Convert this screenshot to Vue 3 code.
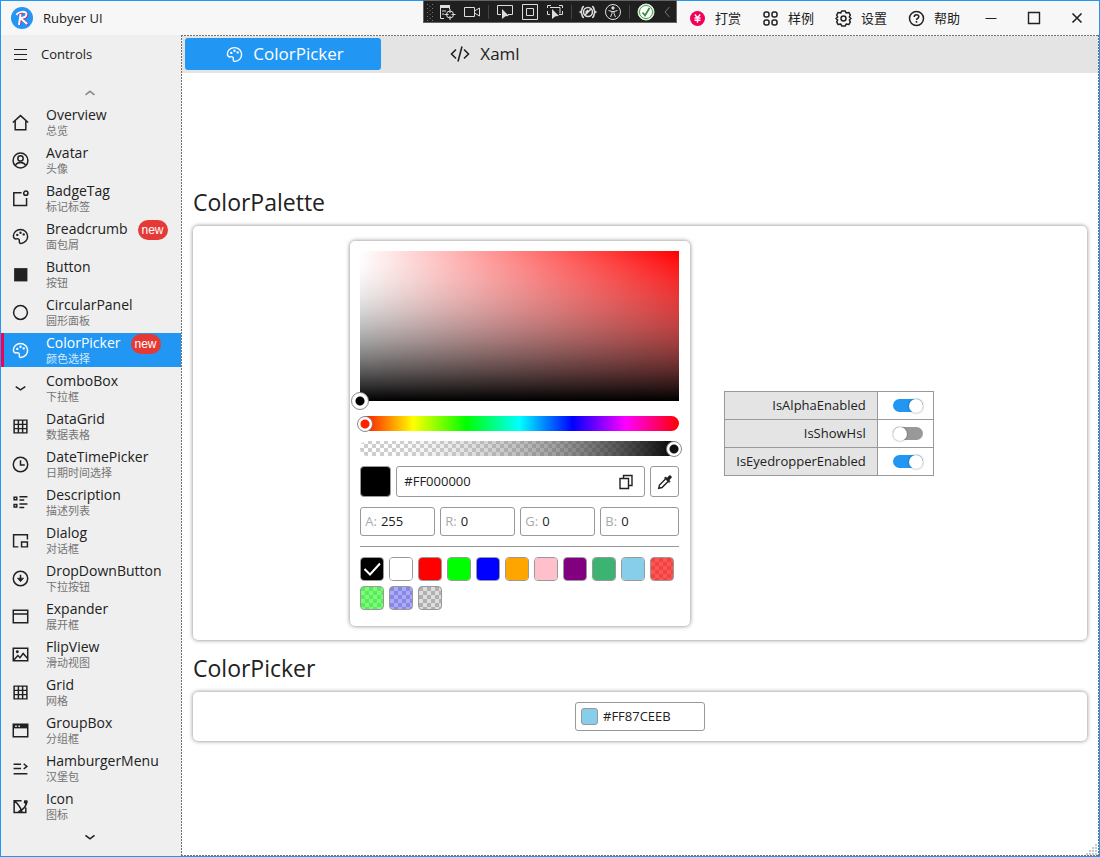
<script setup>
import { ref, reactive } from 'vue'

const palette =
  'M8 1.5C4.2 1.5 1.3 4.2 1.3 7.6c0 2 1.6 3 3 2.6 1.5-.5 2.800.3 2.600 1.900-.2 1.500.3 2.500 1.600 2.400C12.200 14.300 14.800 11.200 14.700 7.800 14.600 4.200 11.700 1.500 8 1.500Z'

const icons = {
  home: '<path d="M.8 8 8 1.500 15.200 8M3 6.500v8.300h10V6.500"/>',
  avatar: '<circle cx="8" cy="8" r="7"/><circle cx="8" cy="6" r="2.500"/><path d="M3 12.700c1.200-2.200 3-2.900 5-2.900s3.800.7 5 2.900"/>',
  badge: '<path d="M9 2.500H1.700v12h12V7.500"/><circle cx="13" cy="3" r="2"/>',
  palette: `<path d="${palette}"/><g fill="currentColor" stroke="none"><circle cx="5" cy="6.500" r="1.100"/><circle cx="8" cy="4.500" r="1.100"/><circle cx="11" cy="6" r="1.100"/></g>`,
  button: '<path d="M2 2h12.500v12.500H2z" fill="currentColor" stroke="none"/>',
  circle: '<circle cx="8" cy="8" r="6.500"/>',
  down: '<path d="M3.500 6.300 8 9.300l4.500-3"/>',
  grid: '<path d="M2 2h12v12H2zM6 2v12M10 2v12M2 6h12M2 10h12"/>',
  clock: '<circle cx="8" cy="8" r="6.800"/><path d="M8 4v4.500h4"/>',
  list: '<path d="M2 3h2.500v2.500H2zM2 9.800h2.500v2.500H2zM7 2.500h7.500M7 5.700h4.500M7 9.500h7.500M7 12.700h4.500"/>',
  dialog: '<path d="M6 14H1.500V2.500h13V7"/><path d="M9 9.500h5.500V14H9z"/>',
  dropdown: '<circle cx="8" cy="8" r="6.800"/><path d="M8 4.500v6"/><path d="m5 7.700 3 3.300 3-3.300z" fill="currentColor" stroke-width=".6"/>',
  expander: '<path d="M1.200 2.200h13.600v11.600H1.200zM1.200 5.700h13.600"/>',
  image: '<path d="M1.200 2.200h13.600v11.600H1.200z"/><path d="m2 13 3.500-4 2 2 3-4 4 4.500"/><circle cx="5" cy="5.500" r=".7"/>',
  group: '<path d="M1.200 2.200h13.600v11.600H1.200z"/><path d="M1 2h14v4H1z" fill="currentColor" stroke="none"/><path d="M3 4h1.500M6 4h1.500" stroke="#efefef"/>',
  hamburger: '<path d="M1.500 4h7M1.500 8h7M1.500 13h13M11 3.500 14 6l-3 2.500"/>',
  icon: '<path d="M9 2.500H2v11.200h11V9M2.500 3c2.500 2 5 5 7 10M6 13c4-1.500 7.500-5 8-10"/><path d="m11.500 2 3 0 0 3-1.500 1-2-1.500z" fill="currentColor" stroke="none"/>',
}

const menu = [
  ['Overview', '总览', 'home'],
  ['Avatar', '头像', 'avatar'],
  ['BadgeTag', '标记标签', 'badge'],
  ['Breadcrumb', '面包屑', 'palette', true],
  ['Button', '按钮', 'button'],
  ['CircularPanel', '圆形面板', 'circle'],
  ['ColorPicker', '颜色选择', 'palette', true],
  ['ComboBox', '下拉框', 'down'],
  ['DataGrid', '数据表格', 'grid'],
  ['DateTimePicker', '日期时间选择', 'clock'],
  ['Description', '描述列表', 'list'],
  ['Dialog', '对话框', 'dialog'],
  ['DropDownButton', '下拉按钮', 'dropdown'],
  ['Expander', '展开框', 'expander'],
  ['FlipView', '滑动视图', 'image'],
  ['Grid', '网格', 'grid'],
  ['GroupBox', '分组框', 'group'],
  ['HamburgerMenu', '汉堡包', 'hamburger'],
  ['Icon', '图标', 'icon'],
].map(([name, sub, icon, isNew]) => ({ name, sub, icon, isNew }))

const selected = ref('ColorPicker')
const hex = ref('#FF000000')
const picked = ref('#FF87CEEB')
const hue = ref(0)
const alpha = ref(255)
const channels = reactive([
  { key: 'A', value: '255' },
  { key: 'R', value: '0' },
  { key: 'G', value: '0' },
  { key: 'B', value: '0' },
])
const swatches = [
  '#000000', '#ffffff', '#ff0000', '#00ff00', '#0000ff', '#ffa500', '#ffc0cb',
  '#800080', '#3cb371', '#87ceeb', '#ff0000aa', '#00ff0088', '#0000ff55', '#00000022',
]
const current = ref('#000000')
const options = reactive([
  { name: 'IsAlphaEnabled', on: true },
  { name: 'IsShowHsl', on: false },
  { name: 'IsEyedropperEnabled', on: true },
])
</script>

<template>
  <div class="window">
    <header class="titlebar">
      <svg class="logo" viewBox="0 0 22 22" aria-hidden="true">
        <circle cx="11" cy="11" r="11" fill="#2196f3" />
        <g fill="none" stroke-linejoin="round">
          <path d="M8.800 17.800 10.300 7.500M6.500 7.500C8 4.800 16.800 4 16.300 7.800c-.3 2.600-3 3.500-6.300 3.500l7 6.200" stroke="#f50057" stroke-width="2" />
          <path d="M8 17.800 9.600 7M5.500 8C7 4.300 15.900 3.600 15.500 7.300c-.3 2.600-3 3.600-6.300 3.600l7 6.200" stroke="#fff" stroke-width="2" />
        </g>
      </svg>
      <span class="app-name">Rubyer UI</span>
      <div class="actions">
        <button class="action" type="button">
          <svg viewBox="0 0 17 17"><circle cx="8.500" cy="8.500" r="7.500" fill="#f50057" /><path d="m5.800 4.500 2.700 3.200 2.700-3.200M8.500 7.700v5M5.500 8h6M5.500 10.300h6" stroke="#fff" stroke-width="1.400" fill="none" /></svg>
          打赏
        </button>
        <button class="action" type="button">
          <svg viewBox="0 0 17 17" fill="none" stroke="currentColor" stroke-width="1.500"><rect x="2" y="2" width="5" height="5" rx="2" /><rect x="10" y="2" width="5" height="5" rx="2" /><rect x="2" y="10" width="5" height="5" rx="2" /><rect x="10" y="10" width="5" height="5" rx="2" /></svg>
          样例
        </button>
        <button class="action" type="button">
          <svg viewBox="0 0 17 17" fill="none" stroke="currentColor" stroke-width="1.500" stroke-linejoin="round"><path d="M6.700 1h3.600l.8 1.900 2.900-.4 1.300 2.700-1 1.800 1.700 1.500-1.700 1.500 1 1.800-1.300 2.700-2.900-.4-.8 1.900H6.700l-.8-1.900-2.900.4-1.300-2.700 1-1.800L1 8.500 2.700 7l-1-1.800L3 2.500l2.900.4z" /><circle cx="8.500" cy="8.500" r="2.500" /></svg>
          设置
        </button>
        <button class="action" type="button">
          <svg viewBox="0 0 17 17" fill="none" stroke="currentColor" stroke-width="1.500"><circle cx="8.500" cy="8.500" r="7" /><path d="M6.200 7c0-3.200 4.600-2.900 4.600-.3 0 1.600-2.300 1.700-2.300 3.300M8.500 11v1.700" /></svg>
          帮助
        </button>
        <button class="win-btn" type="button" aria-label="Minimize"><svg viewBox="0 0 16 16"><path d="M2.500 8.500h11" /></svg></button>
        <button class="win-btn" type="button" aria-label="Maximize"><svg viewBox="0 0 16 16"><path d="M2.500 2.500h11v11h-11z" stroke-width="1.400" /></svg></button>
        <button class="win-btn" type="button" aria-label="Close"><svg viewBox="0 0 16 16"><path d="m3.500 3.500 9 9M12.500 3.500l-9 9" stroke-width="1.600" /></svg></button>
      </div>
    </header>

    <div class="debugbar" aria-hidden="true">
      <svg class="grip" viewBox="0 0 6 18"><path d="M.5 1v17M5.500 1v17" stroke-dasharray="1 3" /><path d="M3 3v15" stroke-dasharray="1 3" /></svg>
      <svg viewBox="0 0 18 18"><path d="M6 15.500H2.500v-13h9V6" /><path d="M2 3.500h10" stroke-width="3" /><path d="M4 8h4M4 11h2" /><circle cx="12" cy="11.500" r="3.500" /><path d="M12 6v4M12 13v4M6.500 11.500h4M13.500 11.500h4" /></svg>
      <svg viewBox="0 0 18 18"><path d="M1.500 4.500h10v9h-10zM11.500 8l5-3v8l-5-3" /></svg>
      <i></i>
      <svg viewBox="0 0 18 18"><path d="M5 11.500H1.500v-9h15v9H12" /><path d="m6 6 7 7-3.500.3L6 16z" fill="currentColor" stroke="none" /></svg>
      <svg viewBox="0 0 18 18"><path d="M1.500 1.500h15v15h-15zM5.500 5.500h7v7h-7z" /></svg>
      <svg viewBox="0 0 18 18"><path d="M1.500 5V2.500H5M13 2.500h3.500V5M1.500 8v3.500H4M16.500 8v3.500H13M4 4.500h10v6" /><path d="m6 6 7 7-3.500.3L6 16z" fill="currentColor" stroke="none" /></svg>
      <i></i>
      <svg viewBox="0 0 18 18"><path d="M5 3.500C2 3.500 4 8 1.500 9 4 10 2 14.500 5 14.500M13 3.500c3 0 1 4.500 3.500 5.500-2.500 1-.5 5.500-3.500 5.500" stroke-width="1.600" /><circle cx="9" cy="9" r="4.500" stroke-width="1.600" /><path d="m6 12 6-6M6.500 9.500 9 7" stroke-width="1.600" /></svg>
      <svg viewBox="0 0 18 18"><circle cx="9" cy="9" r="7.500" /><circle cx="9" cy="5" r="1.200" fill="currentColor" /><path d="M4.500 7.500 8 8.500v2L6.500 14M13.500 7.500 10 8.500v2l1.500 3.500M8 8.500h2" /></svg>
      <i></i>
      <svg viewBox="0 0 18 18"><circle cx="9" cy="9" r="8" fill="#e8f5e9" stroke="#dfeee0" /><circle cx="9" cy="9" r="6.500" stroke="#43a047" fill="#fff" /><path d="m5.500 9.500 2.500 3 4.500-7.500" stroke="#388e3c" stroke-width="1.800" /></svg>
      <svg class="fold" viewBox="0 0 8 18"><path d="M6.500 4 2 9l4.500 5" /></svg>
    </div>

    <div class="body">
      <nav class="sidebar" aria-label="Controls">
        <button class="controls" type="button">
          <svg viewBox="0 0 17 17" aria-hidden="true"><path d="M2 3.500h13M2 8.500h13M2 13.500h13" /></svg>
          Controls
        </button>
        <button class="scroll up" type="button" aria-label="Scroll up"><svg viewBox="0 0 16 16"><path d="M3.500 9.800 8 6.300l4.500 3.500" /></svg></button>
        <ul class="menu">
          <li v-for="m in menu" :key="m.name">
            <a href="#" class="item" :class="{ active: selected === m.name }" @click.prevent="selected = m.name">
              <svg viewBox="0 0 16 16" aria-hidden="true" v-html="icons[m.icon]"></svg>
              <span class="labels">
                <span class="name">{{ m.name }}<span v-if="m.isNew" class="new">new</span></span>
                <span class="sub">{{ m.sub }}</span>
              </span>
            </a>
          </li>
        </ul>
        <button class="scroll" type="button" aria-label="Scroll down"><svg viewBox="0 0 16 16"><path d="M3.500 6.300 8 9.800l4.500-3.500" /></svg></button>
      </nav>

      <main class="content">
        <div class="tabs" role="tablist">
          <button class="tab on" type="button" role="tab" aria-selected="true">
            <svg viewBox="0 0 16 16" v-html="icons.palette"></svg>
            ColorPicker
          </button>
          <button class="tab" type="button" role="tab" aria-selected="false">
            <svg class="code" viewBox="0 0 20 16"><path d="M6 3.500 1.500 8 6 12.500M14 3.500 18.500 8 14 12.500M12 .5 8 15.500" stroke-width="1.600" /></svg>
            Xaml
          </button>
        </div>

        <div class="page">
          <h2>ColorPalette</h2>
          <section class="card demo">
            <div class="palette">
              <div class="field">
                <span class="knob" role="slider" tabindex="0" aria-label="Saturation and value" aria-valuenow="0"></span>
              </div>
              <div class="bar hue"><input v-model="hue" type="range" min="0" max="360" aria-label="Hue" /></div>
              <div class="bar alpha"><input v-model="alpha" type="range" min="0" max="255" aria-label="Alpha" /></div>
              <div class="row">
                <span class="preview"></span>
                <div class="hexbox">
                  <input v-model="hex" type="text" aria-label="Color value" />
                  <button type="button" aria-label="Copy"><svg viewBox="0 0 16 16"><path d="M2 4.500h8.500v10H2zM5.500 4.500v-3H14v10h-3.500" /></svg></button>
                </div>
                <button class="dropper" type="button" aria-label="Eyedropper"><svg viewBox="0 0 16 16"><path d="m8.500 5-6 6-.8 3.300L5 13.500l6-6" /><path d="m7.500 4 1-1 1.700 1.200 1.600-2c1.700-1.300 3.400.4 2.100 2.100l-2 1.600L13 7.500l-1 1z" fill="currentColor" stroke-width=".8" /></svg></button>
              </div>
              <div class="channels">
                <label v-for="c in channels" :key="c.key"><span>{{ c.key }}:</span><input v-model="c.value" type="text" /></label>
              </div>
              <hr />
              <div class="swatches">
                <button v-for="s in swatches" :key="s" type="button" class="swatch" :aria-label="s" @click="current = s">
                  <span :style="{ backgroundColor: s }">
                    <svg v-if="current === s" viewBox="0 0 22 22"><path d="m3.500 11 5.500 5.500L19 5.500" /></svg>
                  </span>
                </button>
              </div>
            </div>

            <table class="options">
              <tbody>
                <tr v-for="o in options" :key="o.name">
                  <th scope="row"><label :for="o.name">{{ o.name }}</label></th>
                  <td><input :id="o.name" v-model="o.on" class="switch" type="checkbox" /></td>
                </tr>
              </tbody>
            </table>
          </section>

          <h2>ColorPicker</h2>
          <section class="card single">
            <label class="picker"><span class="chip"></span><input v-model="picked" type="text" aria-label="Picked color" /></label>
          </section>
        </div>
        <svg class="resize" viewBox="0 0 12 12" aria-hidden="true"><path d="M10 1v11M7 4v8M4 7v5M1 10v2" stroke="#c3cbd2" stroke-width="2" stroke-dasharray="2 1" /></svg>
      </main>
    </div>
  </div>
</template>

<style>
body { background: #fff; }
#app { min-height: 100vh; }
</style>

<style scoped>
* { box-sizing: border-box; }
.window {
  /* white fading in to opaque black, colour and alpha moving together */
  --fade: rgba(255, 255, 255, 0), rgba(230, 230, 230, .1), rgba(204, 204, 204, .2), rgba(179, 179, 179, .3),
    rgba(153, 153, 153, .4), rgba(128, 128, 128, .5), rgba(102, 102, 102, .6), rgba(77, 77, 77, .7),
    rgba(51, 51, 51, .8), rgba(26, 26, 26, .9), #000;
  position: relative;
  display: flex;
  flex-direction: column;
  min-height: 100vh;
  border: 1px solid #2196f3;
  background: #f7f7f7;
  color: #212121;
  font: 13px/20px "Open Sans", "Noto Sans CJK SC", sans-serif;
}
button, input { font: inherit; color: inherit; }
button { border: 0; padding: 0; background: none; }
svg { display: block; flex: none; fill: none; stroke: currentColor; }

.titlebar { display: flex; align-items: center; height: 34px; padding: 0 1px 0 10px; }
.logo { width: 22px; height: 22px; margin-right: 10px; stroke: none; }
.actions { display: flex; height: 100%; margin-left: auto; }
.action { display: flex; align-items: center; gap: 9px; padding: 0 9px 0 12px; }
.action svg { width: 17px; height: 17px; stroke: none; }
.action svg[stroke] { stroke: currentColor; }
.win-btn { display: grid; place-items: center; width: 43px; }
.win-btn svg { width: 16px; height: 16px; }

.debugbar {
  position: absolute;
  top: -1px;
  left: 50%;
  transform: translateX(-50%);
  display: flex;
  align-items: center;
  gap: 9px;
  width: 254px;
  height: 23px;
  padding: 0 3px;
  border: 1px solid #666;
  background: #1f1f1f;
  color: #ddd;
}
.debugbar svg { width: 18px; height: 18px; margin: 0 -1px; }
.debugbar .grip { width: 6px; margin: 0 -3px 0 0; color: #777; }
.debugbar .fold { width: 8px; margin-left: 0; color: #777; }
.debugbar i { width: 1px; height: 14px; margin: 0 -1px; background: #444; }

.body { flex: 1; display: flex; }
.sidebar { display: flex; flex-direction: column; width: 180px; background: #efefef; }
.controls { display: flex; align-items: center; gap: 12px; height: 38px; padding-left: 11px; }
.controls svg { width: 17px; height: 17px; }
.scroll { display: grid; place-items: center; height: 20px; padding-right: 2px; }
.scroll svg { width: 16px; height: 16px; stroke-width: 1.600; }
.scroll.up { margin: 10px 0 2px; color: #8a8a8a; }
.menu { margin: 0; padding: 0; list-style: none; }
.menu li { margin-bottom: 4px; }
.item {
  display: flex;
  align-items: center;
  gap: 17px;
  height: 34px;
  padding-left: 8px;
  border-left: 3px solid transparent;
  color: inherit;
  text-decoration: none;
}
.item svg { width: 17px; height: 17px; stroke-width: 1.400; }
.item.active { background: #2196f3; border-color: #f50057; color: #fff; }
.labels { display: flex; flex-direction: column; }
.name { display: flex; align-items: flex-start; height: 20px; font-size: 14px; line-height: 18px; }
.sub { height: 12px; color: #757575; font-size: 11px; line-height: 10px; }
.active .sub { color: #cfe8fc; }
.new {
  width: 30px;
  margin-left: 10px;
  border-radius: 10px;
  background: #e53935;
  color: #fff;
  font: 12px/20px "Liberation Sans", sans-serif;
  text-align: center;
}

.content {
  --h: repeating-linear-gradient(90deg, #707070 0 2px, transparent 2px 3px);
  --v: repeating-linear-gradient(#707070 0 2px, transparent 2px 3px);
  position: relative;
  flex: 1;
  display: flex;
  flex-direction: column;
  min-width: 0;
  padding: 1px;
  background: var(--h) 0 0 / 100% 1px no-repeat, var(--h) 0 100% / 100% 1px no-repeat,
    var(--v) 0 0 / 1px 100% no-repeat, var(--v) 100% 0 / 1px 100% no-repeat, #fff;
}
.tabs { display: flex; gap: 4px; height: 37px; padding: 2px 3px 3px; background: #e4e4e4; }
.tab {
  display: flex;
  align-items: center;
  justify-content: center;
  gap: 10px;
  width: 196px;
  padding-left: 4px;
  border-radius: 3px;
  font-size: 17px;
}
.tab.on { background: #2196f3; color: #fff; }
.tab svg { width: 17px; height: 17px; stroke-width: 1.300; }
.tab .code { width: 20px; height: 16px; }

.page { flex: 1; display: flex; flex-direction: column; justify-content: center; padding: 0 11px 5px; }
h2 { margin: 0; padding: 8px 0; font-size: 23px; font-weight: 400; line-height: 32px; }
.card, .palette { border-radius: 5px; background: #fff; box-shadow: 0 0 4px rgba(0, 0, 0, .5); }
.card { margin-bottom: 4px; }
.demo { display: flex; align-items: center; justify-content: center; gap: 34px; padding: 15px 12px 14px 16px; }
.single { display: flex; justify-content: center; padding: 10px; }

.palette { width: 340px; padding: 10px 11px 16px 10px; }
.field {
  position: relative;
  height: 150px;
  background: linear-gradient(var(--fade)), linear-gradient(90deg, #fff, #f00);
}
.knob {
  position: absolute;
  left: -9px;
  bottom: -9px;
  width: 18px;
  height: 18px;
  border: 1px solid #888;
  border-radius: 50%;
  background: radial-gradient(circle, #000 4px, #fff 5px);
}
.bar { display: flex; align-items: center; height: 15px; border-radius: 8px; }
.hue { margin-top: 15px; --dot: #ff2200; background: linear-gradient(90deg, #f00, #ff0, #0f0, #0ff, #00f, #f0f, #f00); }
.alpha {
  margin-top: 10px;
  --dot: #111;
  background: linear-gradient(90deg, var(--fade)), repeating-conic-gradient(#fff 0 25%, #ccc 0 50%) 0 -1px / 8px 8px;
}
.bar input { flex: 1; appearance: none; height: 16px; margin: 0 -3px; background: none; }
.bar input::-webkit-slider-thumb {
  appearance: none;
  width: 16px;
  height: 16px;
  border: 1px solid #888;
  border-radius: 50%;
  background: radial-gradient(circle, var(--dot) 4px, #fff 5px);
}
.row { display: flex; align-items: center; gap: 5px; margin-top: 10px; }
.preview { width: 31px; height: 31px; border: 1px solid #999; border-radius: 4px; background: #000; }
.hexbox, .dropper, .channels label, .picker { border: 1px solid #999; border-radius: 3px; background: #fff; }
.hexbox { flex: 1; display: flex; align-items: center; height: 31px; padding: 0 10px 0 7px; }
input[type="text"] { flex: 1; min-width: 0; width: 0; padding: 0 0 2px; border: 0; outline: 0; background: none; }
.hexbox svg, .dropper svg { width: 16px; height: 16px; stroke-width: 1.400; }
.dropper { display: grid; place-items: center; width: 29px; height: 31px; }
.channels { display: grid; grid-template-columns: 75fr 75fr 75fr 79fr; gap: 5px; margin-top: 10px; }
.channels label { display: flex; align-items: center; gap: 4px; height: 29px; padding: 0 4px; }
.channels span { padding-bottom: 2px; color: #aaa; }
hr { height: 1px; margin: 10px 0; border: 0; background: #999; }
.swatches { display: flex; flex-wrap: wrap; gap: 5px; }
.swatch {
  width: 24px;
  height: 24px;
  overflow: hidden;
  border: 1px solid #999;
  border-radius: 4px;
  background: repeating-conic-gradient(#fff 0 25%, #ccc 0 50%) 0 0 / 8px 8px;
}
.swatch span { display: block; height: 100%; }
.swatch svg { width: 22px; height: 22px; stroke: #fff; stroke-width: 2; }

.options { border-collapse: collapse; }
.options th, .options td { height: 28px; border: 1px solid #999; }
.options th { padding: 0 11px 1px; background: #e4e4e4; font-weight: 400; text-align: right; }
.options td { padding: 0 9px 0 14px; }
.switch {
  appearance: none;
  display: flex;
  align-items: center;
  width: 32px;
  height: 16px;
  margin: 0;
}
.switch::before { content: ""; width: 30px; height: 13px; margin-left: 1px; border-radius: 7px; background: #999; }
.switch::after {
  content: "";
  width: 14px;
  height: 14px;
  margin-left: -30px;
  border-radius: 50%;
  background: #fff;
  box-shadow: 0 0 2px rgba(0, 0, 0, .5);
}
.switch:checked::before { background: #2196f3; }
.switch:checked::after { margin-left: -14px; }
.picker { display: flex; align-items: center; gap: 5px; width: 130px; height: 29px; padding: 0 5px; }
.chip { width: 17px; height: 17px; border: 1px solid #999; border-radius: 3px; background: #87ceeb; }
.resize { position: absolute; right: 1px; bottom: 1px; width: 12px; height: 12px; }
</style>
